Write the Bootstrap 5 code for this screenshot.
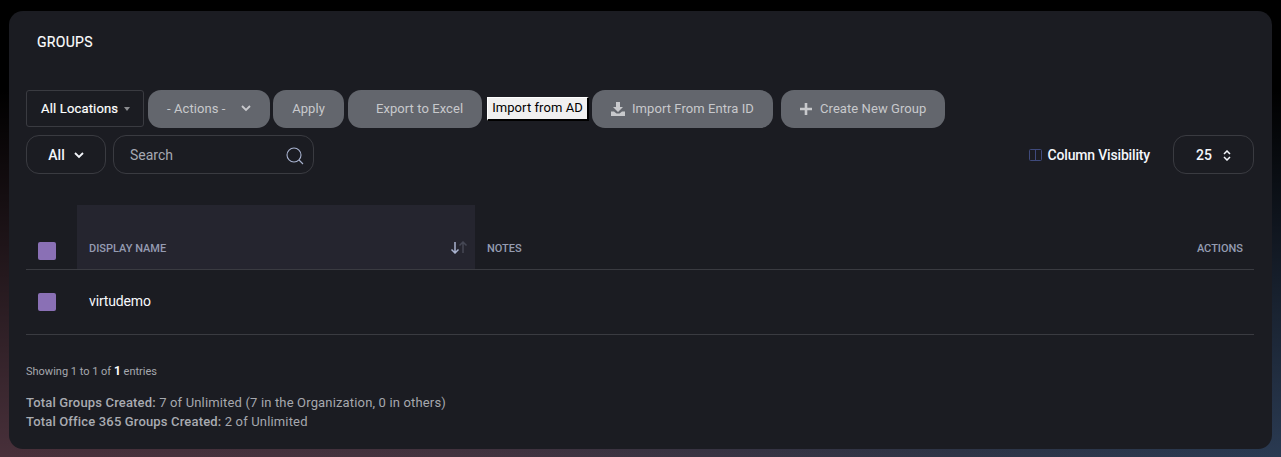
<!DOCTYPE html>
<html lang="en"><head><meta charset="utf-8"><title>Groups</title>
<link href="https://cdn.jsdelivr.net/npm/bootstrap@5.3.0/dist/css/bootstrap.min.css" rel="stylesheet">
<style>
html,body{height:100%;margin:0}
body{font-family:Roboto,"Liberation Sans",sans-serif;overflow:hidden;height:457px;padding:11px 9px 8px;
background:linear-gradient(180deg,#000 0,#000 20%,rgba(0,0,0,0) 100%),linear-gradient(90deg,#48303a 0,#43333f 35%,#2e3547 75%,#2a3a52 100%)}
.panel{background:#1b1c22;border-radius:14px;height:438px;padding:0 18px 0 17px;color:#fff;display:flex;flex-direction:column}
.ttl{font-size:14px;font-weight:400;-webkit-text-stroke:.15px #fff;color:#fff;margin:23px 0 39px 11px;line-height:17px;height:17px;letter-spacing:.3px}
.tools{display:flex;align-items:flex-start;height:38px;font-size:13px}
.loc{width:118px;height:37px;border:1px solid #3a3b41;border-radius:3px;margin-right:4px;font-weight:400;-webkit-text-stroke:.2px #fff;color:#fff;font-size:13px;letter-spacing:.17px;display:flex;align-items:center;padding-left:14px;padding-top:1px}
.loc i{display:block;border-top:4px solid #8b8c90;border-left:3px solid transparent;border-right:3px solid transparent;margin-left:6px}
.gbtn{height:38px;border-radius:13px;background:#63666d;color:#c8c9cc;font-size:13px;letter-spacing:.07px;border:0;display:flex;align-items:center;padding:0 0 2px;line-height:1}
.gbtn svg{margin-top:1px}
.adbtn{background:#f0f0f0;color:#000;font-size:13px;letter-spacing:.07px;border:1px solid #000;border-color:#fff #000 #000 #fff;border-width:1px 2px 2px 1px;height:24px;width:102px;margin:7px 3px 0 5px;padding:0 0 2px;line-height:18px;text-align:center}
.tools2{display:flex;align-items:center;height:39px;margin-top:7px}
.sel{height:39px;border:1px solid #3a3b41;border-radius:13px;display:flex;align-items:center;font-weight:500;color:#f4f6fb;font-size:14px}
.srch{width:201px;margin-left:7px;font-weight:400;color:#a6a9b2;padding-left:16px;padding-top:2px;justify-content:space-between;padding-right:9px}
.cv{margin-left:auto;display:flex;align-items:center;font-weight:500;font-size:14px;letter-spacing:-.17px;color:#f4f6fb;margin-right:23px;padding-top:1px}
.cv svg{margin-right:6px}
.sel.allb{padding-top:1px}
.grid{width:100%;margin:31px 0 0;table-layout:fixed;--bs-table-bg:transparent;--bs-table-color:#fff;border-collapse:collapse;height:129px}
.grid th,.grid td{border-bottom:1px solid #3a3b41;padding:0 12px;box-shadow:none}
.grid th{height:64px;vertical-align:bottom;padding-bottom:14px;font-size:11px;font-weight:500;color:#959cb2;line-height:13px;text-transform:uppercase}
.grid td{height:65px;font-size:14px;letter-spacing:-.15px;color:#f7f9fc;font-weight:400;vertical-align:middle;padding-bottom:1px}
.grid .c1{width:51px;padding:0 0 0 12px}
.grid .c2{width:398px}
.grid .c4{width:79px;padding-right:11px;text-align:right}
.grid th.sorted{background:#25252f;position:relative}
.grid th.c1{padding-bottom:9px}
.grid td.c1{padding-bottom:0}
.ck{display:block;width:18px;height:18px;border-radius:2px;background:#8a70b5}
.sortic{position:absolute;right:7px;bottom:15px}
.info{font-size:11px;color:#a6a8ae;margin-top:30px;line-height:13px}
.info b{color:#fff;font-weight:700;font-size:12px}
.tot{font-size:13px;color:#a6a8ae;line-height:19.500px;margin-top:15px;letter-spacing:.16px}
.tot b{font-weight:500;color:#a9abb1}
</style></head><body>
<div class="panel">
<div class="ttl">GROUPS</div>
<div class="tools">
<div class="loc">All Locations<i></i></div>
<button class="gbtn" style="width:122px"><span style="margin-left:19px">- Actions -</span><svg class="ms-3" width="10" height="7" viewBox="0 0 10 7" fill="none" stroke="#c8c9cc" stroke-width="1.8"><path d="M1 1l4 4 4-4"/></svg></button>
<button class="gbtn justify-content-center" style="width:71px;margin-left:3px">Apply</button>
<button class="gbtn ms-1" style="width:134px"><span style="margin-left:28px">Export to Excel</span></button>
<button class="adbtn">Import from AD</button>
<button class="gbtn" style="width:181px"><svg style="margin-left:19px;margin-right:7px" width="14" height="14" viewBox="0 0 14 14" fill="#c8c9cc"><path d="M5 0h4v5h3L7 10 2 5h3z"/><path d="M0 9.500h3l2.500 2h3l2.500-2h3V14H0z"/></svg>Import From Entra ID</button>
<button class="gbtn" style="width:164px;margin-left:8px"><svg style="margin-left:19px;margin-right:8px" width="12" height="12" viewBox="0 0 12 12" fill="#c8c9cc"><path d="M4.700 0h2.600v4.700H12v2.600H7.300V12H4.700V7.300H0V4.700h4.700z"/></svg>Create New Group</button>
</div>
<div class="tools2">
<div class="sel allb justify-content-center" style="width:80px">All<svg style="margin-left:9px" width="10" height="7" viewBox="0 0 10 7" fill="none" stroke="#f4f6fb" stroke-width="1.8"><path d="M1 1l4 4 4-4"/></svg></div>
<div class="sel srch">Search<svg width="18" height="18" viewBox="0 0 18 18" fill="none" stroke="#a9b3d0" stroke-width="1.100"><circle cx="8" cy="8" r="7"/><path d="M13 13l4 4"/></svg></div>
<div class="cv"><svg width="13" height="12" viewBox="0 0 13 12" fill="none" stroke="#3f4a7c" stroke-width="1"><rect x=".5" y=".5" width="12" height="11" rx="1"/><path d="M6.500 .5v11"/></svg>Column Visibility</div>
<div class="sel allb justify-content-center" style="width:81px">25<svg style="margin-left:11px" width="8" height="11" viewBox="0 0 8 11" fill="none" stroke="#f4f6fb" stroke-width="1.500"><path d="M1 4l3-3 3 3M1 7l3 3 3-3"/></svg></div>
</div>
<table class="table grid">
<thead><tr><th class="c1"><span class="ck"></span></th><th class="c2 sorted">Display Name<svg class="sortic" width="18" height="13" viewBox="0 0 18 13" fill="none" stroke-width="1.500"><path stroke="#a9b3cf" d="M5 1v11M1.500 8.500L5 12l3.500-3.500"/><path stroke="#454754" d="M13 12V1M9.500 4.500L13 1l3.500 3.500"/></svg></th><th>Notes</th><th class="c4">Actions</th></tr></thead>
<tbody><tr><td class="c1"><span class="ck"></span></td><td>virtudemo</td><td></td><td class="c4"></td></tr></tbody>
</table>
<div class="info">Showing 1 to 1 of <b>1</b> entries</div>
<div class="tot"><b>Total Groups Created:</b> 7 of Unlimited (7 in the Organization, 0 in others)<br><b>Total Office 365 Groups Created:</b> 2 of Unlimited</div>
</div>
</body></html>
